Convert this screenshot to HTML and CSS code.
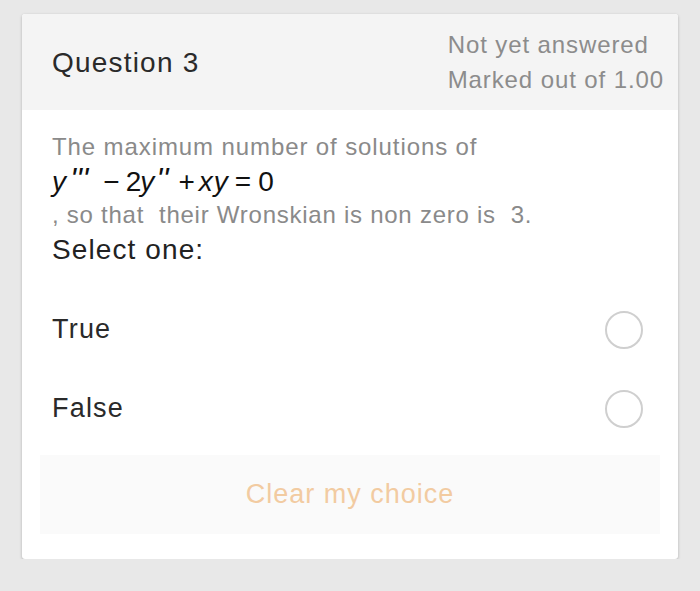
FILE: index.html
```html
<!DOCTYPE html>
<html>
<head>
<meta charset="utf-8">
<link rel="stylesheet" href="styles.css">
</head>
<body>
<div class="card">
  <div class="head">
    <div class="qno">Question 3</div>
    <div class="state">
      <div>Not yet answered</div>
      <div>Marked out of 1.00</div>
    </div>
  </div>
  <div class="content">
    <div class="qtext">
      <div class="line l1">The maximum number of solutions of</div>
      <div class="math"><i class="v">y</i><span class="pr p1">'''</span><span class="op m1">−</span><span class="n2">2</span><i class="v v2">y</i><span class="pr p2">''</span><span class="op m2">+</span><i class="v vx">x</i><i class="v vy">y</i><span class="op m3">=</span><span class="n0">0</span></div>
      <div class="line l3">, so that&nbsp; their Wronskian is non zero is&nbsp; 3.</div>
    </div>
    <div class="prompt">Select one:</div>
    <div class="answers">
      <div class="opt"><span>True</span><span class="radio"></span></div>
      <div class="opt"><span>False</span><span class="radio"></span></div>
    </div>
    <div class="clear">Clear my choice</div>
  </div>
</div>
</body>
</html>
```

FILE: styles.css
```css
html, body {
  margin: 0;
  padding: 0;
  background: #e8e8e8;
  font-family: "Liberation Sans", Arial, sans-serif;
}
body {
  padding: 14px 22px 0 22px;
}
.card {
  width: 656px;
  background: #ffffff;
  border-radius: 3px;
  box-shadow: 0 1px 3px rgba(0,0,0,0.25);
  overflow: hidden;
}
.head {
  background: #f4f4f4;
  height: 96px;
  display: flex;
  align-items: center;
  justify-content: space-between;
  padding: 0 14px 0 30px;
}
.qno {
  font-size: 28px;
  letter-spacing: 1.2px;
  color: #2a2a2a;
  margin-top: 1px;
}
.state {
  font-size: 24px;
  letter-spacing: 0.9px;
  color: #8c8c8c;
  line-height: 35px;
  white-space: nowrap;
}
.content {
  padding: 20px 18px 25px 18px;
}
.qtext {
  padding-left: 12px;
}
.line {
  font-size: 24px;
  letter-spacing: 0.9px;
  color: #8a8a8a;
}
.l1 {
  line-height: 34px;
}
.l3 {
  line-height: 30px;
  letter-spacing: 0.75px;
}
.math {
  font-size: 28px;
  color: #111;
  line-height: 36px;
  height: 36px;
  white-space: nowrap;
}
.math i {
  font-style: italic;
}
.pr {
  font-style: italic;
  font-size: 32px;
  line-height: 0;
  vertical-align: 1px;
}
.p1 {
  margin-left: 4px;
}
.m1 {
  margin-left: 15px;
}
.n2 {
  margin-left: 6px;
}
.v2 {
  margin-left: -1px;
}
.p2 {
  margin-left: 2px;
}
.m2 {
  margin-left: 10px;
}
.vx {
  margin-left: 4px;
}
.vy {
  margin-left: 1px;
}
.m3 {
  margin-left: 7px;
}
.n0 {
  margin-left: 7px;
}
.prompt {
  padding-left: 12px;
  font-size: 28px;
  letter-spacing: 1.1px;
  color: #222;
  line-height: 40px;
}
.answers {
  margin-top: 20px;
}
.opt {
  display: flex;
  align-items: center;
  justify-content: space-between;
  height: 79px;
  padding: 0 17px 0 12px;
  font-size: 27px;
  letter-spacing: 1.2px;
  color: #2a2a2a;
}
.radio {
  width: 34px;
  height: 34px;
  border: 2px solid #cfcfcf;
  border-radius: 50%;
}
.clear {
  margin-top: 7px;
  height: 79px;
  background: #fafafa;
  display: flex;
  align-items: center;
  justify-content: center;
  font-size: 27px;
  letter-spacing: 1px;
  color: #f2cba1;
}
```
